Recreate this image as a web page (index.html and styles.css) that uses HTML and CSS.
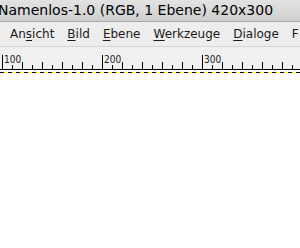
FILE: index.html
```html
<!DOCTYPE html>
<html lang="de">

<head>
    <meta charset="UTF-8">
    <title>Namenlos-1.0</title>
    <link rel="stylesheet" href="styles.css">
</head>

<body>
    <div class="titlebar">Namenlos-1.0 (RGB, 1 Ebene) 420x300</div>

    <nav class="menubar">
        <span class="menu-item">An<u>s</u>icht</span>
        <span class="menu-item"><u>B</u>ild</span>
        <span class="menu-item"><u>E</u>bene</span>
        <span class="menu-item"><u>W</u>erkzeuge</span>
        <span class="menu-item"><u>D</u>ialoge</span>
        <span class="menu-item">F</span>
    </nav>

    <div class="ruler">
        <div class="ruler-seg"><span class="ruler-label">100</span></div>
        <div class="ruler-seg"><span class="ruler-label">200</span></div>
        <div class="ruler-seg"><span class="ruler-label">300</span></div>
    </div>

    <div class="canvas">
        <div class="canvas-edge"></div>
    </div>
</body>

</html>
```

FILE: styles.css
```css
body {
    margin: 0;
    width: 300px;
    height: 248px;
    overflow: hidden;
    background-color: #ffffff;
    font-family: "DejaVu Sans", sans-serif;
}

.titlebar {
    height: 21px;
    line-height: 20px;
    font-size: 14px;
    color: #000000;
    white-space: nowrap;
    text-indent: -2px;
    background: linear-gradient(#e2e2e2, #cfcfcf);
    border-bottom: 1px solid #a8a8a8;
}

.menubar {
    display: flex;
    height: 24px;
    line-height: 25px;
    padding-left: 3.5px;
    font-size: 12px;
    color: #1a1a1a;
    white-space: nowrap;
    background-color: #ededed;
    border-bottom: 1px solid #d6d6d6;
}

.menu-item {
    padding: 0 6.5px;
}

.menu-item u {
    text-decoration-thickness: 1px;
    text-underline-offset: 2px;
}

.ruler {
    display: flex;
    height: 22px;
    padding-left: 2px;
    background-color: #f0f0f0;
    border-bottom: 1px solid #000000;
}

.ruler-seg {
    flex: 0 0 100px;
    height: 22px;
    box-sizing: border-box;
    background-image:
        linear-gradient(to right, #000 1px, transparent 1px),
        linear-gradient(to right, #000 1px, transparent 1px),
        linear-gradient(to right, #000 1px, transparent 1px);
    background-size: 1px 14px, 20px 7px, 20px 4px;
    background-position: 0 bottom, 20px bottom, 10px bottom;
    background-repeat: no-repeat, repeat-x, repeat-x;
}

.ruler-label {
    display: block;
    padding: 7px 0 0 2px;
    font-family: "DejaVu Sans Condensed", "DejaVu Sans", sans-serif;
    font-size: 10px;
    line-height: 12px;
    color: #222222;
}

.canvas {
    padding-top: 2px;
}

.canvas-edge {
    height: 1px;
    background: repeating-linear-gradient(to right, #000 0 4px, #ffff00 4px 8px);
}
```
